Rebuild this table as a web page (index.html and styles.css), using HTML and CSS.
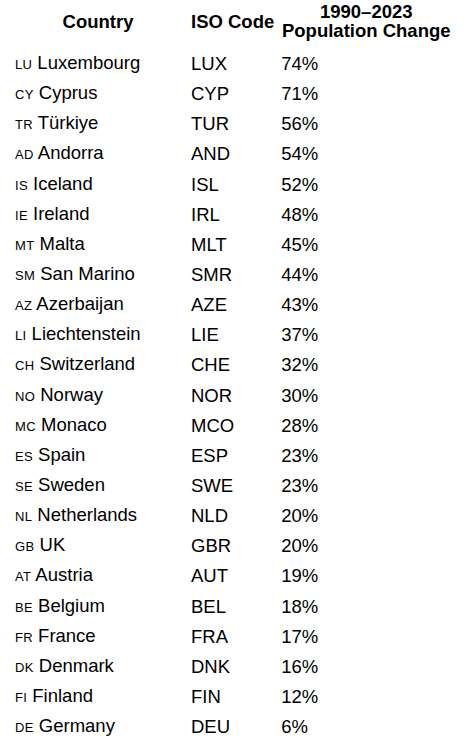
FILE: index.html
```html
<!DOCTYPE html>
<html>
<head>
<meta charset="utf-8">
<link rel="stylesheet" href="styles.css">
</head>
<body>
<table class="pop">
<thead>
<tr><th class="c-country">Country</th><th class="c-iso">ISO Code</th><th class="c-pct">1990–2023<br>Population Change</th></tr>
</thead>
<tbody>
<tr><td><span class="flag">LU</span> Luxembourg</td><td>LUX</td><td>74%</td></tr>
<tr><td><span class="flag">CY</span> Cyprus</td><td>CYP</td><td>71%</td></tr>
<tr><td><span class="flag">TR</span> Türkiye</td><td>TUR</td><td>56%</td></tr>
<tr><td><span class="flag">AD</span> Andorra</td><td>AND</td><td>54%</td></tr>
<tr><td><span class="flag">IS</span> Iceland</td><td>ISL</td><td>52%</td></tr>
<tr><td><span class="flag">IE</span> Ireland</td><td>IRL</td><td>48%</td></tr>
<tr><td><span class="flag">MT</span> Malta</td><td>MLT</td><td>45%</td></tr>
<tr><td><span class="flag">SM</span> San Marino</td><td>SMR</td><td>44%</td></tr>
<tr><td><span class="flag">AZ</span> Azerbaijan</td><td>AZE</td><td>43%</td></tr>
<tr><td><span class="flag">LI</span> Liechtenstein</td><td>LIE</td><td>37%</td></tr>
<tr><td><span class="flag">CH</span> Switzerland</td><td>CHE</td><td>32%</td></tr>
<tr><td><span class="flag">NO</span> Norway</td><td>NOR</td><td>30%</td></tr>
<tr><td><span class="flag">MC</span> Monaco</td><td>MCO</td><td>28%</td></tr>
<tr><td><span class="flag">ES</span> Spain</td><td>ESP</td><td>23%</td></tr>
<tr><td><span class="flag">SE</span> Sweden</td><td>SWE</td><td>23%</td></tr>
<tr><td><span class="flag">NL</span> Netherlands</td><td>NLD</td><td>20%</td></tr>
<tr><td><span class="flag">GB</span> UK</td><td>GBR</td><td>20%</td></tr>
<tr><td><span class="flag">AT</span> Austria</td><td>AUT</td><td>19%</td></tr>
<tr><td><span class="flag">BE</span> Belgium</td><td>BEL</td><td>18%</td></tr>
<tr><td><span class="flag">FR</span> France</td><td>FRA</td><td>17%</td></tr>
<tr><td><span class="flag">DK</span> Denmark</td><td>DNK</td><td>16%</td></tr>
<tr><td><span class="flag">FI</span> Finland</td><td>FIN</td><td>12%</td></tr>
<tr><td><span class="flag">DE</span> Germany</td><td>DEU</td><td>6%</td></tr>
</tbody>
</table>
</body>
</html>
```
FILE: styles.css
```css
html, body {
  margin: 0;
  padding: 0;
  background: #fff;
}
body {
  font-family: "Liberation Sans", Arial, sans-serif;
  color: #000;
}
.pop {
  border-collapse: collapse;
  margin-left: 10px;
  font-size: 18.5px;
}
.pop th {
  font-weight: bold;
  line-height: 19px;
  padding: 2px 5px 9px;
  text-align: center;
  vertical-align: middle;
  white-space: nowrap;
}
.pop td {
  height: 30.15px;
  padding: 0 5px;
  line-height: 22px;
  text-align: left;
  vertical-align: middle;
  white-space: nowrap;
}
.c-country { width: 166px; }
.pop th.c-iso { width: 83px; padding-left: 5px; padding-right: 2px; }
.pop th.c-pct { width: 170px; padding-right: 3px; }
.flag {
  font-size: 13px;
  letter-spacing: 0.3px;
}
```
